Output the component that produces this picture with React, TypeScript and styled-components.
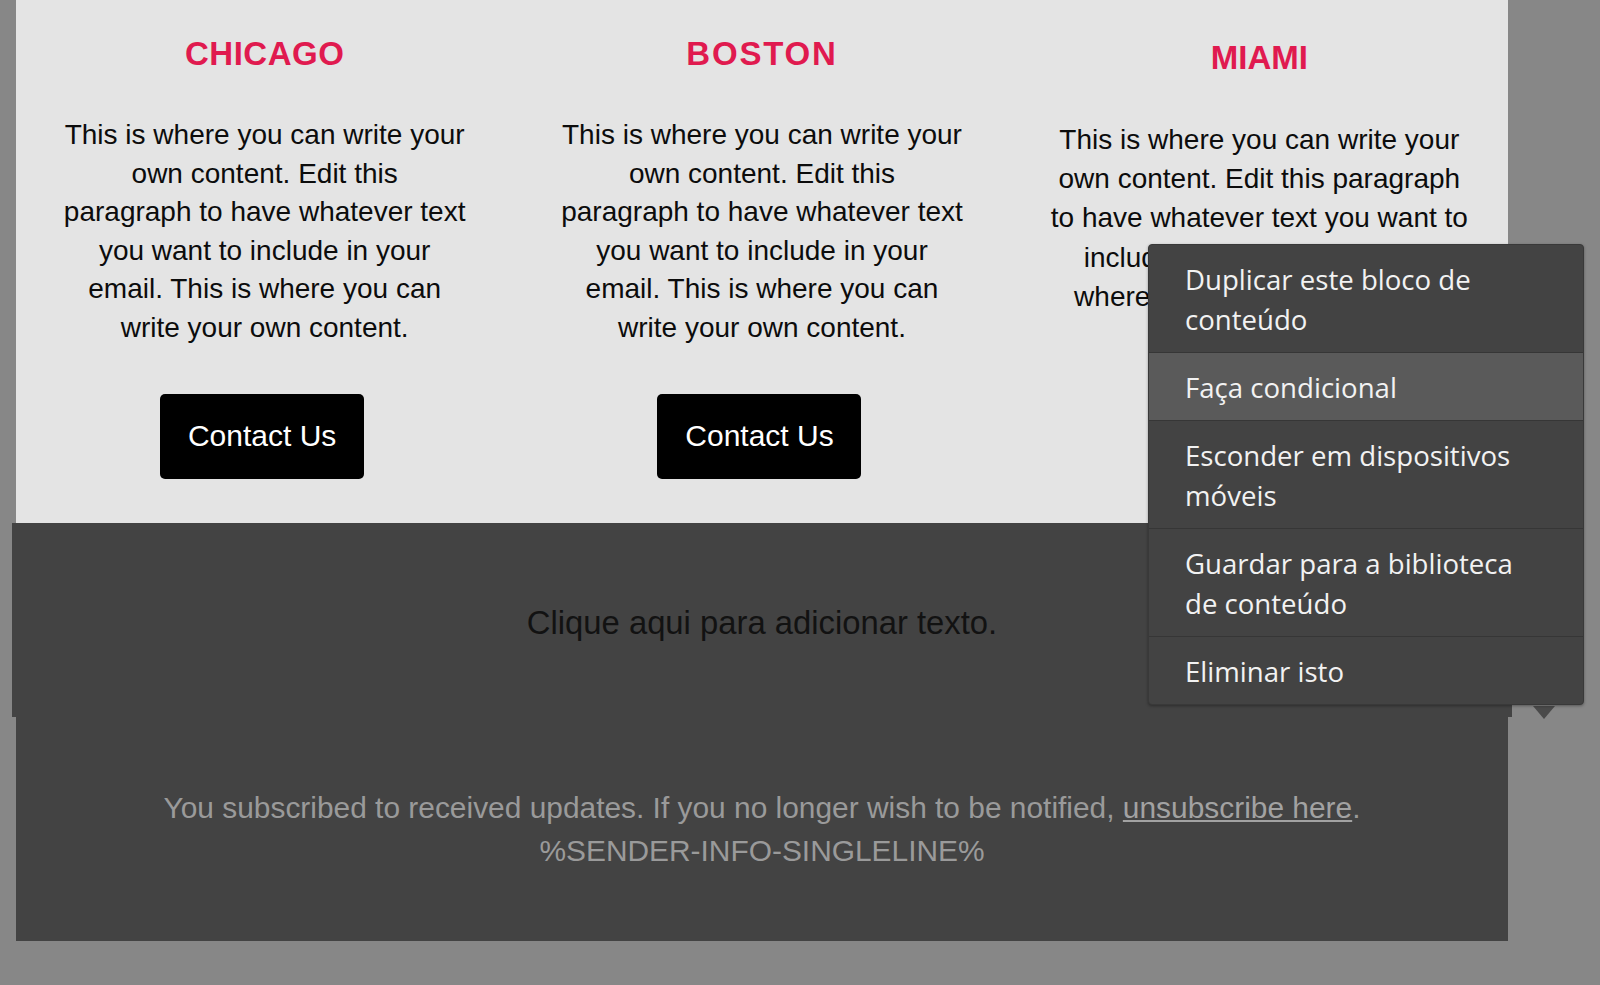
import React from "react";
import styled, { createGlobalStyle } from "styled-components";

const GlobalStyle = createGlobalStyle`
  html, body {
    margin: 0;
    padding: 0;
    background: #878787;
  }
  body {
    font-family: "Liberation Sans", Arial, sans-serif;
    overflow: hidden;
  }
`;

const Page = styled.div`
  position: relative;
  width: 1600px;
  height: 985px;
  padding-left: 16px;
  box-sizing: border-box;
  background: #878787;
`;

const Email = styled.div`
  width: 1492px;
  display: flex;
  flex-direction: column;
`;

const Columns = styled.div`
  display: grid;
  grid-template-columns: repeat(3, 1fr);
  height: 523px;
  background: #e4e4e4;
`;

const Column = styled.div<{ $offset: number }>`
  display: flex;
  flex-direction: column;
  align-items: center;
  padding-top: ${(p) => 34 + p.$offset}px;
`;

const CityHeading = styled.h2<{ $spacing: number }>`
  margin: 0;
  font-size: 33px;
  font-weight: 700;
  line-height: 40px;
  color: #e01a4f;
  letter-spacing: ${(p) => p.$spacing}px;
`;

const Body = styled.p<{ $leading: number }>`
  margin: 42px 0 0;
  font-size: 28px;
  line-height: ${(p) => p.$leading}px;
  text-align: center;
  color: #0c0c0c;
  white-space: nowrap;
`;

const ContactButton = styled.button`
  margin-top: 46px;
  margin-right: 5px;
  width: 204px;
  height: 85px;
  border: none;
  border-radius: 5px;
  background: #000;
  color: #fff;
  font-family: inherit;
  font-size: 30px;
  display: flex;
  align-items: center;
  justify-content: center;
  padding: 0;
`;

const PlaceholderBlock = styled.div`
  margin: 0 -4px;
  height: 194px;
  box-sizing: border-box;
  padding-top: 6px;
  background: #434343;
  display: flex;
  align-items: center;
  justify-content: center;
  font-size: 32.8px;
  color: #121212;
`;

const Footer = styled.div`
  height: 224px;
  background: #434343;
  display: flex;
  flex-direction: column;
  align-items: center;
  justify-content: center;
  font-size: 29.9px;
  line-height: 43px;
  color: #9a9a9a;
  text-align: center;
`;

const FooterLink = styled.a`
  color: #a2a2a2;
  text-decoration: underline;
`;

const Caret = styled.div`
  position: absolute;
  left: 1533px;
  top: 706px;
  width: 0;
  height: 0;
  border-left: 11px solid transparent;
  border-right: 11px solid transparent;
  border-top: 13px solid #4a4a4a;
`;

const Menu = styled.ul`
  position: absolute;
  left: 1148px;
  top: 244px;
  width: 436px;
  box-sizing: border-box;
  margin: 0;
  padding: 0;
  list-style: none;
  background: #434343;
  border: 1px solid #393939;
  border-radius: 4px;
  box-shadow: 0 1px 3px rgba(0, 0, 0, 0.35);
  font-family: "Open Sans", "Noto Sans", sans-serif;
  font-size: 27.6px;
  color: #f2f2f2;
  overflow: hidden;
`;

const MenuItem = styled.li<{ $active?: boolean }>`
  padding: 13.5px 20px 13.5px 36px;
  line-height: 40px;
  white-space: nowrap;
  background: ${(p) => (p.$active ? "#5a5a5a" : "transparent")};
  border-bottom: 1px solid #363636;
  &:last-child {
    border-bottom: none;
  }
`;

type City = {
  name: string;
  spacing: number;
  offset: number;
  leading: number;
  lines: string[];
  button: boolean;
};

const standardLines = [
  "This is where you can write your",
  "own content. Edit this",
  "paragraph to have whatever text",
  "you want to include in your",
  "email. This is where you can",
  "write your own content.",
];

const cities: City[] = [
  { name: "CHICAGO", spacing: 0.5, offset: 0, leading: 38.6, lines: standardLines, button: true },
  { name: "BOSTON", spacing: 1.8, offset: 0, leading: 38.6, lines: standardLines, button: true },
  {
    name: "MIAMI",
    spacing: 0,
    offset: 4,
    leading: 39.2,
    lines: [
      "This is where you can write your",
      "own content. Edit this paragraph",
      "to have whatever text you want to",
      "include in your email. This is",
      "where you can write your own",
      "content.",
    ],
    button: false,
  },
];

const menuItems: { lines: string[]; active?: boolean }[] = [
  { lines: ["Duplicar este bloco de", "conteúdo"] },
  { lines: ["Faça condicional"], active: true },
  { lines: ["Esconder em dispositivos", "móveis"] },
  { lines: ["Guardar para a biblioteca", "de conteúdo"] },
  { lines: ["Eliminar isto"] },
];

const withBreaks = (lines: string[]) =>
  lines.map((line, i) => (
    <React.Fragment key={i}>
      {i > 0 && <br />}
      {line}
    </React.Fragment>
  ));

export default function App() {
  return (
    <>
      <GlobalStyle />
      <Page>
        <Email>
          <Columns>
            {cities.map((c) => (
              <Column key={c.name} $offset={c.offset}>
                <CityHeading $spacing={c.spacing}>{c.name}</CityHeading>
                <Body $leading={c.leading}>{withBreaks(c.lines)}</Body>
                {c.button && <ContactButton>Contact Us</ContactButton>}
              </Column>
            ))}
          </Columns>
          <PlaceholderBlock>Clique aqui para adicionar texto.</PlaceholderBlock>
          <Footer>
            <div>
              You subscribed to received updates. If you no longer wish to be notified,{" "}
              <FooterLink href="#">unsubscribe here</FooterLink>.
            </div>
            <div>%SENDER-INFO-SINGLELINE%</div>
          </Footer>
        </Email>
        <Caret />
        <Menu>
          {menuItems.map((item, i) => (
            <MenuItem key={i} $active={item.active}>
              {withBreaks(item.lines)}
            </MenuItem>
          ))}
        </Menu>
      </Page>
    </>
  );
}
